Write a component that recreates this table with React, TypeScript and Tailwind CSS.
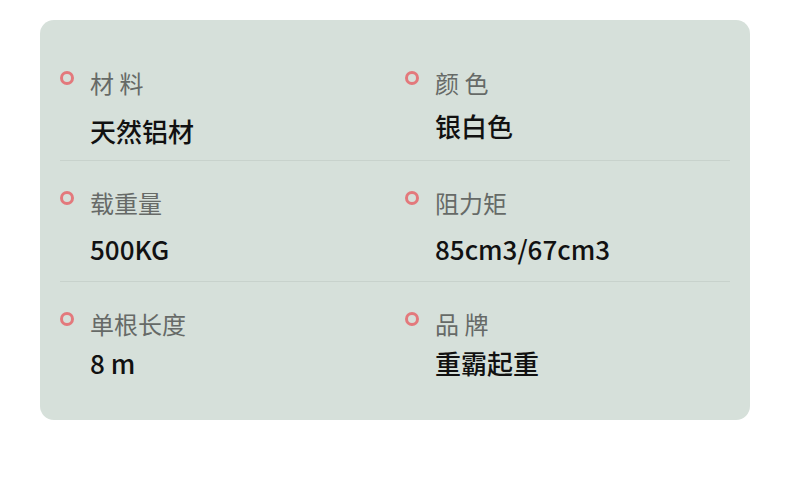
import React from "react";

const font = { fontFamily: '"Noto Sans CJK SC", "Noto Sans", sans-serif' };

function Cell({ label, value, gap }: { label: string; value: string; gap: string }) {
  return (
    <div className="flex items-start">
      <div className="mt-[4px] h-[14px] w-[14px] shrink-0 rounded-full border-[3px] border-[#e3797c]" />
      <div className="ml-[16px] flex flex-col">
        <div className="text-[24px] leading-[32px] text-[#666a67]">{label}</div>
        <div className={`text-[26px] font-medium leading-[36px] text-[#111111] ${gap}`}>{value}</div>
      </div>
    </div>
  );
}

export default function App() {
  return (
    <div className="h-[480px] w-[790px] bg-white pl-[40px] pt-[20px]" style={font}>
      <div className="flex h-[400px] w-[710px] flex-col rounded-[14px] bg-[#d6e0da] px-[20px]">
        <div className="grid grid-cols-[345px_1fr] border-b border-[#c8d2cc] pb-[11px] pt-[47px]">
          <Cell label="材 料" value="天然铝材" gap="mt-[14px]" />
          <Cell label="颜 色" value="银白色" gap="mt-[9px]" />
        </div>
        <div className="grid grid-cols-[345px_1fr] border-b border-[#c8d2cc] pb-[14px] pt-[26px]">
          <Cell label="载重量" value="500KG" gap="mt-[12px]" />
          <Cell label="阻力矩" value="85cm3/67cm3" gap="mt-[12px]" />
        </div>
        <div className="grid grid-cols-[345px_1fr] pt-[26px]">
          <Cell label="单根长度" value="8 m" gap="mt-[5px]" />
          <Cell label="品 牌" value="重霸起重" gap="mt-[5px]" />
        </div>
      </div>
    </div>
  );
}
